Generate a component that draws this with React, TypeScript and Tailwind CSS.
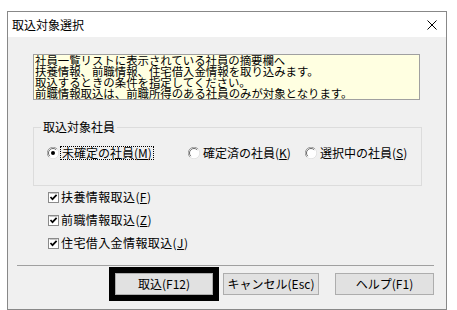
import React from "react";

const Radio = ({ checked }: { checked?: boolean }) => (
  <svg width="12" height="12" viewBox="0 0 12 12" className="shrink-0">
    <circle cx="6" cy="6" r="5.5" fill="#ffffff" />
    <path d="M1.9 10.1 A5.5 5.5 0 0 1 10.1 1.9" stroke="#a0a0a0" strokeWidth="1" fill="none" />
    <path d="M10.1 1.9 A5.5 5.5 0 0 1 1.9 10.1" stroke="#e3e3e3" strokeWidth="1" fill="none" />
    <path d="M2.8 9.2 A4.5 4.5 0 0 1 9.2 2.8" stroke="#696969" strokeWidth="1" fill="none" />
    {checked && <circle cx="6" cy="6" r="2" fill="#000000" />}
  </svg>
);

const Check = () => (
  <svg width="11" height="11" viewBox="0 0 11 11" className="shrink-0">
    <rect x="0.5" y="0.5" width="10" height="10" fill="#ffffff" stroke="#8a8a8a" />
    <path d="M1.5 1.5 H9.5" stroke="#c8c8c8" strokeWidth="1" />
    <path d="M2.5 5 L4.5 7.2 L8.6 2.8" stroke="#000000" strokeWidth="1.7" fill="none" />
  </svg>
);

export default function App() {
  return (
    <div className="w-[457px] h-[310px] bg-white pt-[11px] pl-[7px] overflow-hidden font-['Noto_Sans_CJK_JP',sans-serif] text-black">
      <div className="w-[440px] h-[299px] border border-[#888888] bg-[#f0f0f0] flex flex-col">
        {/* title bar */}
        <div className="h-[25px] shrink-0 bg-white flex items-center justify-between pl-[4px] pr-[9px]">
          <span className="text-[12px] leading-[12px]">取込対象選択</span>
          <svg width="10" height="10" viewBox="0 0 10 10">
            <path d="M0.5 0.5 L9.5 9.5 M9.5 0.5 L0.5 9.5" stroke="#000000" strokeWidth="1" />
          </svg>
        </div>

        <div className="pl-[25px] pt-[17px]">
          {/* info box */}
          <div className="w-[387px] h-[46px] border border-[#a0a0a0] bg-[#ffffe1] pl-[1px] text-[11.4px] leading-[11px] whitespace-nowrap">
            <div>社員一覧リストに表示されている社員の摘要欄へ</div>
            <div>扶養情報、前職情報、住宅借入金情報を取り込みます。</div>
            <div>取込するときの条件を指定してください。</div>
            <div>前職情報取込は、前職所得のある社員のみが対象となります。</div>
          </div>

          {/* group box */}
          <fieldset className="mt-[21px] w-[389px] h-[65px] border border-[#dcdcdc]">
            <legend className="ml-[7px] px-[2px] text-[12px] leading-[12px]">取込対象社員</legend>
            <div className="mt-[13px] pl-[13px] flex items-center h-[13px] text-[12px] leading-[12px]">
              <div className="w-[141px] flex items-center">
                <Radio checked />
                <span className="ml-[1px] px-[1px] border border-dotted border-black leading-[12px]">
                  未確定の社員(<span className="underline">M</span>)
                </span>
              </div>
              <div className="w-[117px] flex items-center">
                <Radio />
                <span className="ml-[2px] px-[1px] leading-[12px]">
                  確定済の社員(<span className="underline">K</span>)
                </span>
              </div>
              <div className="flex items-center">
                <Radio />
                <span className="ml-[2px] px-[1px] leading-[12px]">
                  選択中の社員(<span className="underline">S</span>)
                </span>
              </div>
            </div>
          </fieldset>

          {/* checkboxes */}
          <div className="mt-[5px] pl-[15px] flex flex-col gap-[11px] text-[12px] leading-[12px] tracking-[0.4px]">
            <div className="h-[12px] flex items-center gap-[1px]">
              <Check />
              <span className="ml-[1px]">扶養情報取込(<span className="underline">F</span>)</span>
            </div>
            <div className="h-[12px] flex items-center gap-[1px]">
              <Check />
              <span className="ml-[1px]">前職情報取込(<span className="underline">Z</span>)</span>
            </div>
            <div className="h-[12px] flex items-center gap-[1px]">
              <Check />
              <span className="ml-[1px]">住宅借入金情報取込(<span className="underline">J</span>)</span>
            </div>
          </div>
        </div>

        {/* separator */}
        <div className="mt-[16px] ml-[9px] w-[417px] h-px bg-[#a0a0a0]" />

        {/* buttons */}
        <div className="mt-[7px] ml-[107px] flex items-center text-[12px] leading-[12px]">
          <button className="w-[98px] h-[22px] bg-[#e1e1e1] border border-[#adadad] outline-[6px] outline-solid outline-black flex items-center justify-center">
            取込(F12)
          </button>
          <button className="ml-[10px] w-[96px] h-[22px] bg-[#e1e1e1] border border-[#adadad] flex items-center justify-center">
            キャンセル(Esc)
          </button>
          <button className="ml-[16px] w-[99px] h-[22px] bg-[#e1e1e1] border border-[#adadad] flex items-center justify-center">
            ヘルプ(F1)
          </button>
        </div>
      </div>
    </div>
  );
}
